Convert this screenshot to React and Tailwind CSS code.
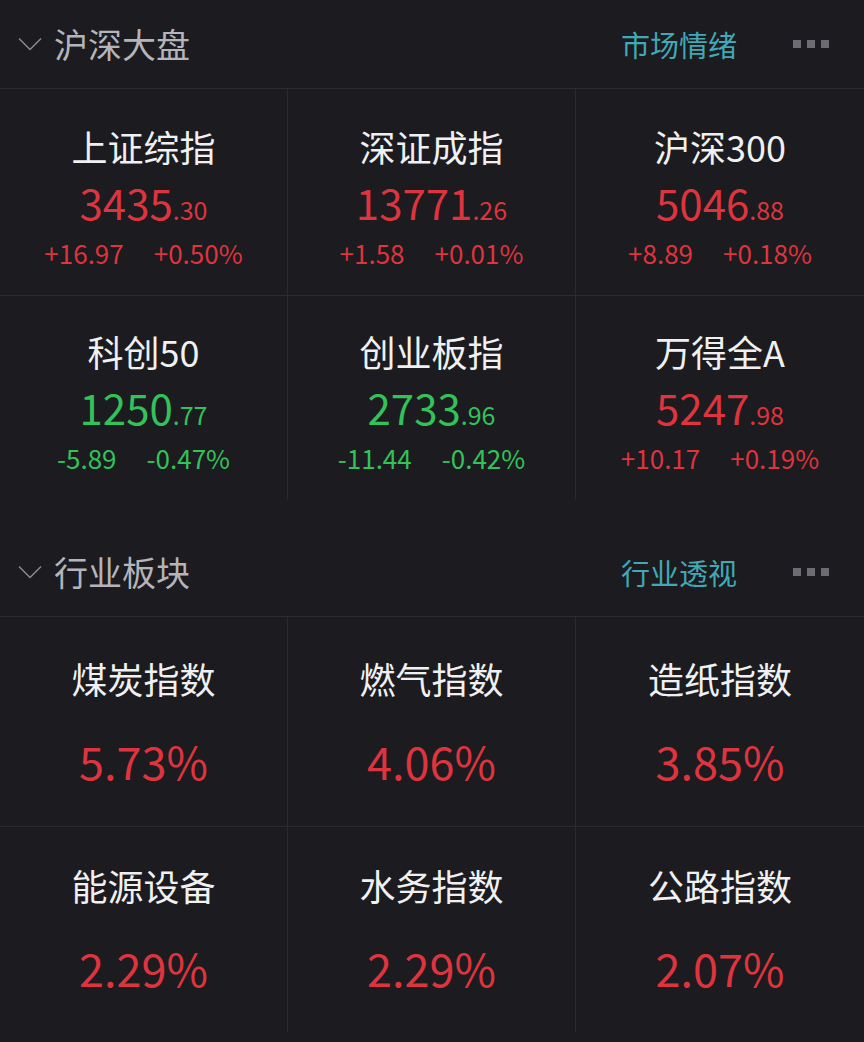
import React from 'react'

const indices = [
  { name: '上证综指', int: '3435', dec: '.30', chg: '+16.97', pct: '+0.50%', up: true },
  { name: '深证成指', int: '13771', dec: '.26', chg: '+1.58', pct: '+0.01%', up: true },
  { name: '沪深300', int: '5046', dec: '.88', chg: '+8.89', pct: '+0.18%', up: true },
  { name: '科创50', int: '1250', dec: '.77', chg: '-5.89', pct: '-0.47%', up: false },
  { name: '创业板指', int: '2733', dec: '.96', chg: '-11.44', pct: '-0.42%', up: false },
  { name: '万得全A', int: '5247', dec: '.98', chg: '+10.17', pct: '+0.19%', up: true },
]

const sectors = [
  { name: '煤炭指数', pct: '5.73%' },
  { name: '燃气指数', pct: '4.06%' },
  { name: '造纸指数', pct: '3.85%' },
  { name: '能源设备', pct: '2.29%' },
  { name: '水务指数', pct: '2.29%' },
  { name: '公路指数', pct: '2.07%' },
]

function SectionHeader({ title, link }) {
  return (
    <div className="flex items-center h-[88px] pl-[18px] pr-[35px]">
      <svg className="w-[24px] h-[14px]" viewBox="0 0 24 14" fill="none" stroke="#8a8a90" strokeWidth="1.5">
        <path d="M1 1.5l11 11 11-11" />
      </svg>
      <span className="ml-[12px] text-[34px] leading-none text-[#b4b4ba]">{title}</span>
      <span className="ml-auto text-[29px] leading-none text-[#41a8b4]">{link}</span>
      <div className="ml-[56px] flex gap-[6px]">
        <span className="w-[8px] h-[8px] bg-[#6c6c72]" />
        <span className="w-[8px] h-[8px] bg-[#6c6c72]" />
        <span className="w-[8px] h-[8px] bg-[#6c6c72]" />
      </div>
    </div>
  )
}

function IndexCell({ item, i }) {
  const color = item.up ? 'text-[#de343d]' : 'text-[#33c25a]'
  return (
    <div
      className={`flex flex-col items-center ${i < 3 ? 'h-[207px] pt-[35px] border-b border-[#2a2a30]' : 'h-[204px] pt-[33px]'} ${i % 3 !== 2 ? 'border-r border-[#2a2a30]' : ''}`}
    >
      <div className="h-[44px] leading-[44px] text-[36px] text-[#f0f0f0]">{item.name}</div>
      <div className={`mt-[10px] h-[48px] flex items-baseline ${color}`}>
        <span className="text-[42px] leading-[48px]">{item.int}</span>
        <span className="text-[25px] leading-[48px]">{item.dec}</span>
      </div>
      <div className={`mt-[11px] h-[32px] flex items-center gap-[30px] text-[26px] leading-none ${color}`}>
        <span>{item.chg}</span>
        <span>{item.pct}</span>
      </div>
    </div>
  )
}

function SectorCell({ item, i }) {
  return (
    <div
      className={`flex flex-col items-center ${i < 3 ? 'h-[210px] pt-[39px] border-b border-[#2a2a30]' : 'h-[205px] pt-[36px]'} ${i % 3 !== 2 ? 'border-r border-[#2a2a30]' : ''}`}
    >
      <div className="h-[44px] leading-[44px] text-[36px] text-[#f0f0f0]">{item.name}</div>
      <div className="mt-[33px] h-[56px] leading-[56px] text-[45px] text-[#de343d]">{item.pct}</div>
    </div>
  )
}

export default function App() {
  return (
    <div
      className="w-[864px] h-[1042px] bg-[#1b1b20] overflow-hidden"
      style={{ fontFamily: '"Noto Sans CJK SC", "Noto Sans", sans-serif' }}
    >
      <SectionHeader title="沪深大盘" link="市场情绪" />
      <div className="grid grid-cols-3 border-t border-[#2a2a30]">
        {indices.map((item, i) => (
          <IndexCell key={item.name} item={item} i={i} />
        ))}
      </div>

      <div className="mt-[28px]">
        <SectionHeader title="行业板块" link="行业透视" />
      </div>
      <div className="grid grid-cols-3 border-t border-[#2a2a30]">
        {sectors.map((item, i) => (
          <SectorCell key={item.name} item={item} i={i} />
        ))}
      </div>
    </div>
  )
}
